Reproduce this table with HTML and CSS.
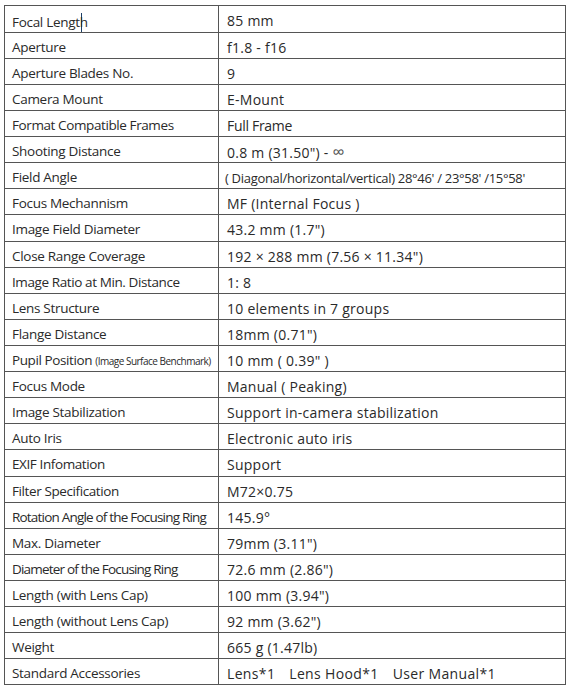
FILE: index.html
```html
<!DOCTYPE html>
<html lang="en">
<head>
<meta charset="utf-8">
<title>Lens Specifications</title>
<link rel="stylesheet" href="styles.css">
</head>
<body>
<table class="spec">
  <colgroup>
    <col class="col-k">
    <col class="col-v">
  </colgroup>
  <tbody>
    <tr><td class="k">Focal Lengt<span class="caret"></span>h</td><td class="v">85 mm</td></tr>
    <tr><td class="k">Aperture</td><td class="v">f1.8 - f16</td></tr>
    <tr><td class="k">Aperture Blades No.</td><td class="v">9</td></tr>
    <tr><td class="k">Camera Mount</td><td class="v">E-Mount</td></tr>
    <tr><td class="k tight">Format Compatible Frames</td><td class="v tight">Full Frame</td></tr>
    <tr><td class="k">Shooting Distance</td><td class="v">0.8 m (31.50") - <span class="inf">∞</span></td></tr>
    <tr><td class="k">Field Angle</td><td class="v narrow">( Diagonal/horizontal/vertical) 28°46' / 23°58' /15°58'</td></tr>
    <tr><td class="k">Focus Mechannism</td><td class="v">MF (Internal Focus )</td></tr>
    <tr class="tall"><td class="k">Image Field Diameter</td><td class="v">43.2 mm (1.7")</td></tr>
    <tr><td class="k">Close Range Coverage</td><td class="v">192 × 288 mm (7.56 × 11.34")</td></tr>
    <tr><td class="k tight">Image Ratio at Min. Distance</td><td class="v">1: 8</td></tr>
    <tr><td class="k">Lens Structure</td><td class="v">10 elements in 7 groups</td></tr>
    <tr><td class="k">Flange Distance</td><td class="v">18mm (0.71")</td></tr>
    <tr><td class="k tight">Pupil Position <span class="note">(Image Surface Benchmark)</span></td><td class="v">10 mm ( 0.39" )</td></tr>
    <tr><td class="k">Focus Mode</td><td class="v">Manual ( Peaking)</td></tr>
    <tr><td class="k">Image Stabilization</td><td class="v">Support in-camera stabilization</td></tr>
    <tr><td class="k">Auto Iris</td><td class="v">Electronic auto iris</td></tr>
    <tr class="tall"><td class="k tight">EXIF Infomation</td><td class="v">Support</td></tr>
    <tr><td class="k tight">Filter Specification</td><td class="v">M72×0.75</td></tr>
    <tr><td class="k tighter">Rotation Angle of the Focusing Ring</td><td class="v">145.9°</td></tr>
    <tr><td class="k">Max. Diameter</td><td class="v">79mm (3.11")</td></tr>
    <tr><td class="k tighter">Diameter of the Focusing Ring</td><td class="v">72.6 mm (2.86")</td></tr>
    <tr><td class="k">Length (with Lens Cap)</td><td class="v">100 mm (3.94")</td></tr>
    <tr><td class="k">Length (without Lens Cap)</td><td class="v">92 mm (3.62")</td></tr>
    <tr><td class="k">Weight</td><td class="v">665 g (1.47lb)</td></tr>
    <tr><td class="k">Standard Accessories</td><td class="v wide">Lens*1<span class="gap"></span>Lens Hood*1<span class="gap"></span>User Manual*1</td></tr>
  </tbody>
</table>
</body>
</html>
```
FILE: styles.css
```css
html, body {
  margin: 0;
  padding: 0;
  background: #ffffff;
}

body {
  padding: 5px 0 0 4px;
  font-family: "Open Sans", "Noto Sans", sans-serif;
  color: #2a2a2a;
}

.spec {
  border-collapse: collapse;
  width: 562px;
  table-layout: fixed;
}

.col-k {
  width: 214px;
}

.spec td {
  border: 1px solid #555555;
  white-space: nowrap;
  overflow: hidden;
  line-height: 14px;
  vertical-align: top;
}

.spec .k {
  font-size: 13.5px;
  padding: 7px 0 0 7px;
  height: 18px;
  letter-spacing: -0.3px;
}

.spec .v {
  font-size: 14px;
  padding: 8px 0 0 8px;
  height: 17px;
  letter-spacing: 0.25px;
}

.spec .tall .k {
  height: 19px;
}

.spec .tall .v {
  height: 18px;
}

.spec .k.tight {
  letter-spacing: -0.4px;
}

.spec .k.tighter {
  letter-spacing: -0.8px;
}

.spec .v.tight {
  letter-spacing: -0.3px;
}

.spec .v.narrow {
  font-size: 13px;
  letter-spacing: -0.3px;
  padding-left: 6px;
}

.spec .v.wide {
  letter-spacing: 0.35px;
}

.note {
  font-size: 10px;
  letter-spacing: -0.5px;
}

.inf {
  font-size: 17px;
  line-height: 14px;
  color: #555555;
}

.gap {
  display: inline-block;
  width: 14px;
}

.caret {
  display: inline-block;
  width: 1px;
  height: 19px;
  margin-left: 1px;
  margin-right: -2px;
  background: #1c3f66;
  vertical-align: -5px;
}
```
